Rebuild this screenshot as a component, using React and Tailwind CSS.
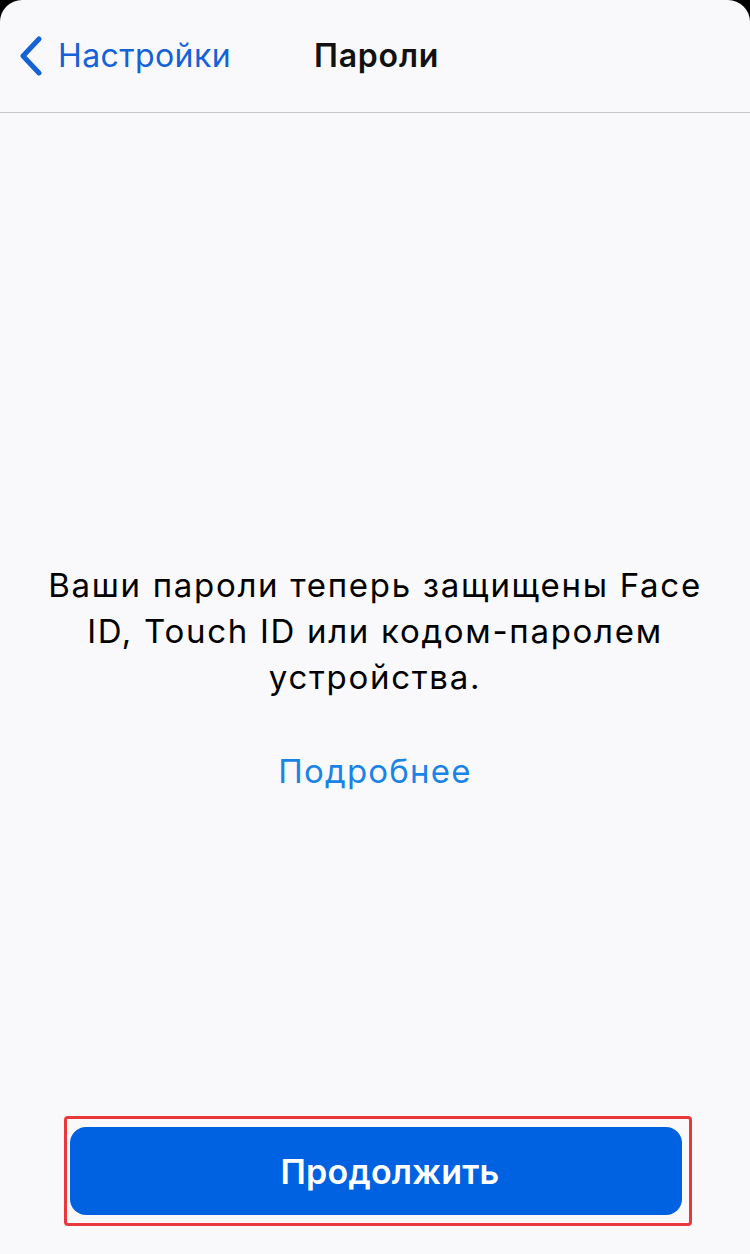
export default function App() {
  return (
    <div
      className="w-[750px] h-[1254px] bg-black overflow-hidden"
      style={{ fontFamily: 'Inter, "Liberation Sans", sans-serif' }}
    >
      <div className="flex h-full flex-col rounded-t-[22px] bg-[#f9f9fb]">
        {/* navigation bar */}
        <div className="relative flex h-[113px] shrink-0 items-center border-b border-[#c6c6c8]">
          <button className="flex items-center pl-[18px] text-[#1462d6]">
            <svg width="26" height="40" viewBox="0 0 26 40" fill="none">
              <path
                d="M21 3 L5 20 L21 37"
                stroke="currentColor"
                strokeWidth="5"
                strokeLinecap="round"
                strokeLinejoin="round"
              />
            </svg>
            <span className="ml-[14px] text-[32px] leading-none tracking-[0.4px]">Настройки</span>
          </button>
          <div className="ml-[83px] text-[32px] font-semibold leading-none tracking-[0.8px] text-[#111]">
            Пароли
          </div>
        </div>

        {/* message */}
        <div className="flex flex-1 flex-col items-center pt-[449px]">
          <p className="w-[670px] text-center text-[33px] leading-[46px] tracking-[1.7px] text-black">
            Ваши пароли теперь защищены Face ID, Touch ID или кодом-паролем
            устройства.
          </p>
          <a className="mt-[48px] text-[33px] leading-[46px] tracking-[1.2px] text-[#1a84e6]">Подробнее</a>
        </div>

        {/* bottom action */}
        <div className="pb-[28px] pl-[64px]">
          <div className="w-[628px] rounded-[4px] border-[3px] border-[#e8383d] pb-[8px] pl-[3px] pr-[7px] pt-[8px]">
            <button className="flex h-[88px] w-full items-center justify-center rounded-[16px] bg-[#0062e0] pl-[28px] text-[34px] font-semibold tracking-[0.2px] text-white">
              Продолжить
            </button>
          </div>
        </div>
      </div>
    </div>
  );
}
